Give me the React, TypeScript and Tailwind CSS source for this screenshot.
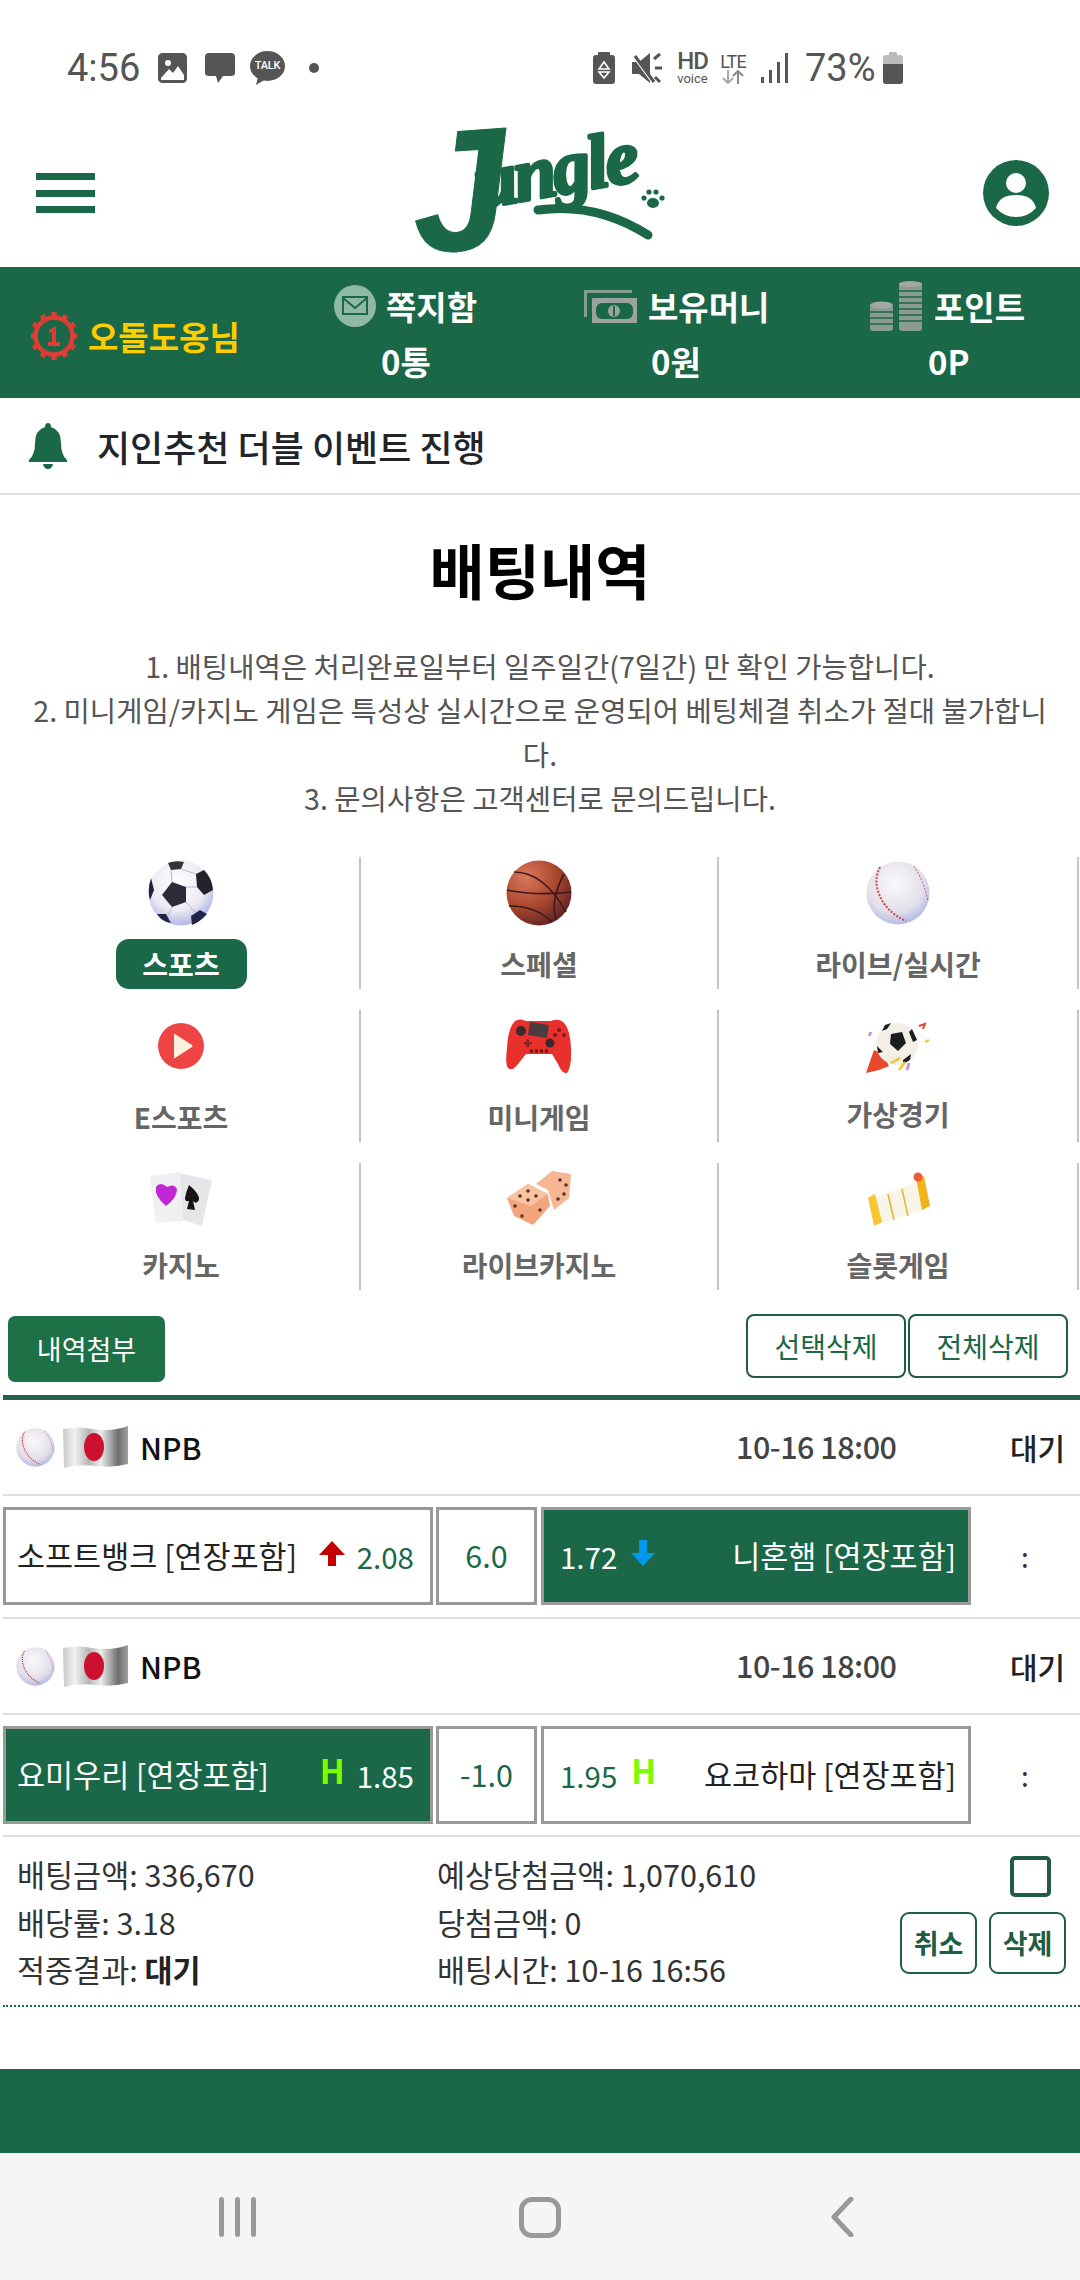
const GREEN = "#1a6847";

// ---- small drawings -------------------------------------------------------

function SoccerBall({ size = 66 }: { size?: number }) {
  return (
    <svg width={size} height={size} viewBox="0 0 66 66">
      <defs>
        <radialGradient id="sb" cx="45%" cy="35%" r="70%">
          <stop offset="0%" stopColor="#ffffff" />
          <stop offset="60%" stopColor="#ecebf4" />
          <stop offset="100%" stopColor="#a2aae0" />
        </radialGradient>
      </defs>
      <circle cx="33" cy="33" r="32.5" fill="url(#sb)" />
      <path d="M24 22 L38 27 L38 42 L24 47 L14 35 Z" fill="#2c2c36" />
      <path d="M20 3 Q27 0 36 2 L33 9 L23 10 Z" fill="#33333d" />
      <path d="M48 14 L56 10 Q64 18 65 30 L56 35 L49 27 Z" fill="#23232d" />
      <path d="M3 18 L6 30 L2 40 Q-1 30 3 18 Z" fill="#20203a" />
      <path d="M43 56 L52 50 L59 54 Q52 62 44 65 Z" fill="#20264a" />
      <path d="M9 54 L18 54 L23 63 Q14 62 9 54 Z" fill="#20264a" />
      <path d="M23 10 L24 22 M38 27 L49 27 M38 42 L47 52 M24 47 L20 55 M33 9 L48 14" stroke="#b8b8c8" strokeWidth="1" fill="none" />
    </svg>
  );
}

function Basketball() {
  return (
    <svg width="66" height="66" viewBox="0 0 66 66">
      <defs>
        <radialGradient id="bb" cx="30%" cy="25%" r="85%">
          <stop offset="0%" stopColor="#d9785a" />
          <stop offset="55%" stopColor="#a9482f" />
          <stop offset="100%" stopColor="#5b1f22" />
        </radialGradient>
      </defs>
      <circle cx="33" cy="33" r="32.5" fill="url(#bb)" />
      <g stroke="#3a1a1c" strokeWidth="1.6" fill="none">
        <path d="M1 30 Q30 36 65 32" />
        <path d="M8 12 Q38 12 60 52" />
        <path d="M3 46 Q30 46 46 62" />
        <path d="M58 14 Q44 40 50 60" />
      </g>
    </svg>
  );
}

function Baseball({ size = 64 }: { size?: number }) {
  return (
    <svg width={size} height={size} viewBox="0 0 64 64">
      <defs>
        <radialGradient id={`bs${size}`} cx="45%" cy="35%" r="70%">
          <stop offset="0%" stopColor="#fbf9fb" />
          <stop offset="65%" stopColor="#e4dfe9" />
          <stop offset="100%" stopColor="#a8b3e2" />
        </radialGradient>
      </defs>
      <circle cx="32" cy="32" r="31.5" fill={`url(#bs${size})`} />
      <path d="M14 6 Q8 18 12 30 Q18 50 40 60" stroke="#c94a4a" strokeWidth="2" strokeDasharray="2 1.5" fill="none" />
      <path d="M48 5 Q58 20 62 40" stroke="#b45a7a" strokeWidth="1" strokeDasharray="2 1.5" fill="none" />
    </svg>
  );
}

function PlayIcon() {
  return (
    <svg width="46" height="46" viewBox="0 0 46 46">
      <circle cx="23" cy="23" r="23" fill="#ee4444" />
      <path d="M16 12 Q15 11 17 11 L34 22 Q35 23 34 24 L17 35 Q15 36 16 34 Z" fill="#fdf0dc" />
    </svg>
  );
}

function Gamepad() {
  return (
    <svg width="66" height="56" viewBox="0 0 66 56">
      <path d="M9 3 Q14 0 20 3 L45 3 Q52 0 57 4 Q64 10 65 30 Q66 48 61 55 Q56 56 52 46 L46 36 L20 36 L12 46 Q6 54 2 50 Q-1 46 1 30 Q2 10 9 3 Z" fill="#e8302c" />
      <path d="M24 4 L43 7 L41 20 L22 17 Z" fill="#4a3c40" />
      <circle cx="15" cy="13" r="5" fill="#3b2a2a" />
      <circle cx="44" cy="25" r="4.5" fill="#3b2a2a" />
      <path d="M18 24 h2.5 v-2.5 h2.5 v2.5 h2.5 v2.5 h-2.5 v2.5 h-2.5 v-2.5 h-2.5 Z" fill="#8c1f1f" />
      <circle cx="53" cy="12" r="2" fill="#7d1a1a" />
      <circle cx="58" cy="17" r="2" fill="#7d1a1a" />
      <circle cx="49" cy="17" r="2" fill="#7d1a1a" />
      <path d="M24 33 h18" stroke="#6e1616" strokeWidth="3" strokeDasharray="3 2" />
    </svg>
  );
}

function RocketBall() {
  return (
    <svg width="66" height="56" viewBox="0 0 66 56">
      <path d="M1 53 L9 30 L18 34 L24 46 L14 50 Z" fill="#e8482c" />
      <circle cx="32" cy="24" r="21" fill="#f3eee6" />
      <path d="M26 14 L37 12 L41 23 L33 31 L25 24 Z" fill="#1d1d1f" />
      <path d="M20 5 L26 3 L22 9 L17 11 Z M47 9 L52 20 L48 22 L44 12 Z M12 26 L18 32 L13 33 Z M38 40 L46 34 L45 40 L38 44 Z" fill="#1d1d1f" />
      <path d="M26 43 L35 38 M34 50 L40 42" stroke="#f4c430" strokeWidth="2.5" />
      <path d="M42 50 L44 43" stroke="#c084e8" strokeWidth="2.5" />
      <path d="M54 6 L60 4 L58 9" stroke="#e8482c" strokeWidth="2" fill="none" />
      <path d="M4 16 L6 12" stroke="#c084e8" strokeWidth="2.5" />
      <path d="M60 22 L64 20" stroke="#f4c430" strokeWidth="2.5" />
    </svg>
  );
}

function Cards() {
  return (
    <svg width="66" height="54" viewBox="0 0 66 54">
      <path d="M30 1 L64 8 L54 54 L29 46 Z" fill="#e6e5e8" />
      <path d="M2 4 L32 0 L35 49 L8 51 Z" fill="#f0eff2" />
      <path d="M18 34 Q6 24 8 15 Q12 9 19 15 Q26 11 29 17 Q29 26 18 34 Z" fill="#c026d3" />
      <path d="M41 13 Q52 22 51 28 Q48 33 45 29 L47 38 L39 37 L41 29 Q37 30 37 26 Q38 20 41 13 Z" fill="#151515" />
    </svg>
  );
}

function Dice() {
  return (
    <svg width="66" height="56" viewBox="0 0 66 56">
      <path d="M30 14 L46 1 L65 4 L63 28 L48 40 L42 20 Z" fill="#f7b693" />
      <path d="M1 28 L22 14 L42 24 L44 36 L27 55 L8 46 Z" fill="#f4a47c" />
      <path d="M1 28 L22 14 L42 24 L25 36 Z" fill="#f8c3a1" />
      <g fill="#5a3324">
        <circle cx="14" cy="26" r="1.8" /><circle cx="22" cy="21" r="1.8" /><circle cx="30" cy="26" r="1.8" />
        <circle cx="22" cy="30" r="1.8" /><circle cx="9" cy="36" r="1.8" /><circle cx="16" cy="46" r="1.8" />
        <circle cx="34" cy="40" r="1.8" /><circle cx="54" cy="10" r="1.8" /><circle cx="60" cy="15" r="1.8" />
        <circle cx="58" cy="24" r="1.8" /><circle cx="52" cy="29" r="1.8" />
      </g>
    </svg>
  );
}

function Slot() {
  return (
    <svg width="64" height="56" viewBox="0 0 64 56">
      <path d="M8 26 L52 10 L58 38 L12 52 Z" fill="#f8f4e6" />
      <path d="M2 26 L9 22 L16 50 L8 54 Z" fill="#f6c530" />
      <path d="M50 6 L58 4 L64 34 L56 38 Z" fill="#f0b31c" />
      <path d="M22 22 L28 48 M36 17 L42 44" stroke="#e3b93a" strokeWidth="1.6" />
      <circle cx="52" cy="5" r="4.5" fill="#ee5a3a" />
    </svg>
  );
}

function JapanFlag({ id }: { id: string }) {
  return (
    <svg width="68" height="42" viewBox="0 0 68 42">
      <defs>
        <linearGradient id={id} x1="0" x2="1" y1="0" y2="0">
          <stop offset="0%" stopColor="#c8c8c8" />
          <stop offset="18%" stopColor="#f2f2f2" />
          <stop offset="40%" stopColor="#b5b5b5" />
          <stop offset="58%" stopColor="#eeeeee" />
          <stop offset="85%" stopColor="#6e6e6e" />
          <stop offset="100%" stopColor="#a0a0a0" />
        </linearGradient>
      </defs>
      <path d="M1 3 Q18 0 30 3 Q50 6 66 0 L66 38 Q50 42 34 40 Q18 38 2 42 Z" fill={`url(#${id})`} />
      <ellipse cx="32" cy="21" rx="10" ry="14" fill="#cc1030" />
    </svg>
  );
}

// the script wordmark stays real text, only the swoosh and the paw are drawn
function Logo() {
  return (
    <svg width="254" height="128" viewBox="0 0 254 128" className="block overflow-visible">
      <g fill={GREEN} stroke={GREEN} strokeLinejoin="round">
        <text x="-4" y="122" fontSize="172" strokeWidth="1" transform="rotate(-4 40 70)" style={{ fontFamily: "'Liberation Sans', sans-serif", fontStyle: "italic", fontWeight: 700 }}>J</text>
        <text x="62" y="74" fontSize="76" strokeWidth="3.5" letterSpacing="-3" transform="rotate(-10 100 70)" style={{ fontFamily: "'Liberation Serif', serif", fontStyle: "italic", fontWeight: 700 }}>ungle</text>
      </g>
      <path d="M122 82 Q180 74 232 107" stroke={GREEN} strokeWidth="9" strokeLinecap="round" fill="none" />
      <g fill={GREEN}>
        <ellipse cx="237" cy="75" rx="6" ry="5" />
        <circle cx="228" cy="70" r="2.6" /><circle cx="233" cy="64" r="2.6" />
        <circle cx="240" cy="64" r="2.6" /><circle cx="246" cy="70" r="2.6" />
      </g>
    </svg>
  );
}

// ---- status bar bits ------------------------------------------------------

function StatusBar() {
  return (
    <div className="flex h-[110px] items-center pt-[26px] text-[#555] [font-family:Roboto,sans-serif]">
      <span className="ml-[67px] w-[91px] text-[38px] leading-none">4:56</span>
      <svg width="29" height="30" viewBox="0 0 29 30" className="block">
        <rect x="1.5" y="1.5" width="26" height="27" rx="3" fill="none" stroke="#555" strokeWidth="3" />
        <rect x="3" y="3" width="23" height="24" fill="#555" />
        <circle cx="10" cy="10" r="3" fill="#fff" />
        <path d="M3 25 L11 16 L15 20 L20 13 L26 22 L26 27 L3 27 Z" fill="#fff" />
      </svg>
      <svg width="32" height="32" viewBox="0 0 32 32" className="ml-[17px] block">
        <path d="M5 1 H27 Q31 1 31 5 V21 Q31 24 27 24 H19 L14 31 L12 24 H5 Q1 24 1 21 V5 Q1 1 5 1 Z" fill="#555" />
      </svg>
      <div className="relative ml-[14px] h-[34px] w-[35px]">
        <svg width="35" height="34" viewBox="0 0 35 34" className="block">
          <ellipse cx="17.5" cy="15" rx="17.5" ry="15" fill="#555" />
          <path d="M8 26 L6 34 L16 28 Z" fill="#555" />
        </svg>
        <span className="absolute left-0 top-[8px] w-full text-center text-[11px] font-medium leading-[14px] tracking-tight text-white">TALK</span>
      </div>
      <span className="ml-[24px] size-[10px] rounded-full bg-[#555]" />

      <svg width="22" height="32" viewBox="0 0 22 32" className="ml-[274px] block">
        <rect x="5" y="0" width="12" height="4" rx="1" fill="#555" />
        <rect x="0" y="3" width="22" height="29" rx="3" fill="#555" />
        <path d="M11 10 L16 17 H6 Z M6 20 H16 L11 26 Z" fill="none" stroke="#fff" strokeWidth="1.6" />
      </svg>
      <svg width="30" height="32" viewBox="0 0 30 32" className="ml-[17px] block">
        <path d="M0 10 H7 L18 1 V31 L7 22 H0 Z" fill="#555" />
        <path d="M1 3 L20 29" stroke="#fff" strokeWidth="3" />
        <path d="M3 4 L22 30" stroke="#555" strokeWidth="3" />
        <path d="M22 7 L28 2 M23 16 H30 M23 25 L28 30" stroke="#555" strokeWidth="3" />
      </svg>
      <div className="ml-[14px] flex w-[33px] flex-col items-center">
        <span className="text-[24px] font-medium leading-[21px] tracking-tighter">HD</span>
        <span className="text-[13px] leading-[13px]">voice</span>
      </div>
      <div className="ml-[9px] flex w-[30px] flex-col items-center">
        <span className="text-[18px] leading-[17px] tracking-tighter">LTE</span>
        <svg width="26" height="14" viewBox="0 0 26 14" className="block">
          <path d="M8 0 V13 M3 8 L8 13 L13 8" stroke="#aaa" strokeWidth="2" fill="none" />
          <path d="M18 14 V1 M13 6 L18 1 L23 6" stroke="#888" strokeWidth="2" fill="none" />
        </svg>
      </div>
      <svg width="28" height="30" viewBox="0 0 28 30" className="ml-[13px] block">
        <rect x="0" y="24" width="3" height="6" fill="#555" />
        <rect x="8" y="17" width="3" height="13" fill="#555" />
        <rect x="16" y="9" width="3" height="21" fill="#555" />
        <rect x="24" y="0" width="3" height="30" fill="#555" />
      </svg>
      <span className="ml-[16px] w-[78px] text-[38px] leading-none">73%</span>
      <svg width="20" height="32" viewBox="0 0 20 32" className="block">
        <rect x="6" y="0" width="8" height="4" rx="1" fill="#bbb" />
        <rect x="0" y="3" width="20" height="29" rx="3" fill="#bbb" />
        <path d="M0 12 H20 V29 Q20 32 17 32 H3 Q0 32 0 29 Z" fill="#555" />
      </svg>
    </div>
  );
}

// ---- green member strip ---------------------------------------------------

function Medal() {
  const teeth = Array.from({ length: 12 }, (_, i) => i * 30);
  return (
    <svg width="46" height="48" viewBox="0 0 46 48">
      <g fill="#e03c36">
        {teeth.map((a) => (
          <rect key={a} x="20.5" y="0" width="5" height="6" transform={`rotate(${a} 23 24)`} />
        ))}
      </g>
      <circle cx="23" cy="24" r="18.5" fill="none" stroke="#e03c36" strokeWidth="4.5" />
      <path d="M18 18 L25 14 V30 H29 V34 H17 V30 H21 V20 L18 21 Z" fill="#e03c36" />
    </svg>
  );
}

function Envelope() {
  return (
    <svg width="42" height="42" viewBox="0 0 42 42">
      <circle cx="21" cy="21" r="21" fill="#8fb8a6" />
      <rect x="9" y="12" width="24" height="17" fill="none" stroke={GREEN} strokeWidth="2" />
      <path d="M9 13 L21 23 L33 13" fill="none" stroke={GREEN} strokeWidth="2" />
    </svg>
  );
}

function Cash() {
  return (
    <svg width="53" height="34" viewBox="0 0 53 34">
      <path d="M0 1 H48 V4 H3 V28 H0 Z" fill="#849e92" />
      <rect x="8" y="9" width="45" height="25" fill="#9aa39e" />
      <rect x="12" y="14" width="37" height="16" rx="6" fill={GREEN} />
      <circle cx="30" cy="22" r="6" fill="#9aa39e" />
      <rect x="29" y="17" width="2" height="10" fill={GREEN} />
    </svg>
  );
}

function Coins() {
  return (
    <svg width="52" height="50" viewBox="0 0 52 50">
      <rect x="0" y="23" width="23" height="27" rx="3" fill="#8a9b92" />
      <rect x="29" y="1" width="23" height="49" rx="3" fill="#8a9b92" />
      <ellipse cx="11.5" cy="24" rx="11.5" ry="3.5" fill="#a3a8a4" />
      <ellipse cx="40.5" cy="3" rx="11.5" ry="3" fill="#a3a8a4" />
      <path d="M0 31 H23 M0 37 H23 M0 43 H23 M29 10 H52 M29 16 H52 M29 22 H52 M29 28 H52 M29 34 H52 M29 40 H52" stroke={GREEN} strokeWidth="1.4" />
    </svg>
  );
}

function StatItem({ icon, label, value, width, labelGap, valueOffset }: {
  icon: React.ReactNode; label: string; value: string; width: string; labelGap: string; valueOffset: string;
}) {
  return (
    <div className={`flex ${width} flex-col`}>
      <div className={`flex h-[58px] items-center ${labelGap}`}>
        {icon}
        <span className="text-[33px] font-bold leading-none text-white">{label}</span>
      </div>
      <span className={`${valueOffset} -mt-[3px] text-[33px] font-bold leading-[58px] text-white`}>{value}</span>
    </div>
  );
}

function MemberStrip() {
  return (
    <div className="flex h-[131px] items-start bg-[#1a6847] pt-[10px]">
      <div className="ml-[31px] mt-[35px] flex w-[303px] items-center gap-[11px]">
        <Medal />
        <span className="text-[33px] font-bold leading-none text-[#ffcc00]">오돌도옹님</span>
      </div>
      <StatItem icon={<Envelope />} label="쪽지함" value="0통" width="w-[250px]" labelGap="gap-[10px]" valueOffset="ml-[47px]" />
      <StatItem icon={<Cash />} label="보유머니" value="0원" width="w-[286px]" labelGap="gap-[11px]" valueOffset="ml-[67px]" />
      <StatItem icon={<Coins />} label="포인트" value="0P" width="w-[200px]" labelGap="gap-[12px]" valueOffset="ml-[58px]" />
    </div>
  );
}

// ---- category grid --------------------------------------------------------

const CATEGORIES: { label: string; icon: React.ReactNode; iconPad: string; labelPad?: string; rowH?: string; active?: boolean }[] = [
  { label: "스포츠", icon: <SoccerBall />, iconPad: "pt-[3px]", active: true },
  { label: "스페셜", icon: <Basketball />, iconPad: "pt-[3px]" },
  { label: "라이브/실시간", icon: <Baseball />, iconPad: "pt-[4px]" },
  { label: "E스포츠", icon: <PlayIcon />, iconPad: "pt-[13px]" },
  { label: "미니게임", icon: <Gamepad />, iconPad: "pt-[8px]" },
  { label: "가상경기", icon: <RocketBall />, iconPad: "pt-[10px]", labelPad: "-mt-[3px]" },
  { label: "카지노", icon: <Cards />, iconPad: "pt-[9px]", labelPad: "-mt-[5px]", rowH: "h-[127px]" },
  { label: "라이브카지노", icon: <Dice />, iconPad: "pt-[7px]", labelPad: "-mt-[5px]", rowH: "h-[127px]" },
  { label: "슬롯게임", icon: <Slot />, iconPad: "pt-[9px]", labelPad: "-mt-[5px]", rowH: "h-[127px]" },
];

function CategoryGrid() {
  return (
    <div className="mt-[37px] grid grid-cols-[358px_358px_360px] gap-y-[21px] pl-[3px]">
      {CATEGORIES.map((c) => (
        <div key={c.label} className={`flex ${c.rowH ?? "h-[132px]"} flex-col items-center border-r-2 border-[#c4c4c4]`}>
          <div className={`flex h-[82px] items-start ${c.iconPad}`}>{c.icon}</div>
          {c.active ? (
            <span className="flex h-[50px] w-[131px] items-center justify-center rounded-[13px] bg-[#1a6847] text-[28px] font-bold text-white">
              {c.label}
            </span>
          ) : (
            <span className={`flex h-[50px] items-center text-[28px] font-bold text-[#666] ${c.labelPad ?? ""}`}>{c.label}</span>
          )}
        </div>
      ))}
    </div>
  );
}

// ---- bet history ----------------------------------------------------------

function MatchHead({ id }: { id: string }) {
  return (
    <div className="ml-[3px] flex h-[96px] items-center border-b-2 border-[#dedede] pl-[13px]">
      <Baseball size={39} />
      <div className="ml-[7px]"><JapanFlag id={id} /></div>
      <span className="ml-[10px] w-[596px] text-[30px] font-medium text-[#111]">NPB</span>
      <span className="w-[274px] text-[30.5px] font-medium tracking-[-0.5px] text-[#444]">10-16 18:00</span>
      <span className="text-[30px] font-medium text-[#222]">대기</span>
    </div>
  );
}

function Cell({ on, className, children }: { on?: boolean; className: string; children: React.ReactNode }) {
  return (
    <div className={`flex h-[98px] items-center border-[3px] border-[#999] text-[30.5px] ${on ? "bg-[#1a6847] text-white" : "bg-white text-[#1a6847]"} ${className}`}>
      {children}
    </div>
  );
}

function UpArrow() {
  return (
    <svg width="26" height="25" viewBox="0 0 26 25"><path d="M13 0 L26 14 H17 V25 H9 V14 H0 Z" fill="#c40000" /></svg>
  );
}

function DownArrow() {
  return (
    <svg width="24" height="26" viewBox="0 0 24 26"><path d="M8 0 H16 V13 H24 L12 26 L0 13 H8 Z" fill="#0099ee" /></svg>
  );
}

function BetRow({ home, homeOn, homeMark, homeOdd, line, away, awayOn, awayMark, awayOdd }: {
  home: string; homeOn?: boolean; homeMark: React.ReactNode; homeOdd: string; line: string;
  away: string; awayOn?: boolean; awayMark: React.ReactNode; awayOdd: string;
}) {
  return (
    <div className="ml-[3px] mt-[11px] flex gap-[3px]">
      <Cell on={homeOn} className="w-[430px] pl-[11px] pr-[16px]">
        <span className={`mr-auto ${homeOn ? "text-white" : "text-[#222]"}`}>{home}</span>
        <span className="-mt-[6px] mr-[12px]">{homeMark}</span>
        <span className="text-[29.5px]">{homeOdd}</span>
      </Cell>
      <Cell className="w-[101px] justify-center">{line}</Cell>
      <Cell on={awayOn} className="ml-[1px] w-[430px] pl-[16px] pr-[12px]">
        <span className="text-[29.5px]">{awayOdd}</span>
        <span className="-mt-[6px] ml-[14px]">{awayMark}</span>
        <span className={`ml-auto ${awayOn ? "text-white" : "text-[#222]"}`}>{away}</span>
      </Cell>
      <span className="ml-[47px] self-center text-[28px] leading-none text-[#333]">:</span>
    </div>
  );
}

const HandicapMark = () => <span className="text-[33px] font-bold leading-none text-[#7cfc00]">H</span>;

function InfoLine({ label, value, strong }: { label: string; value: string; strong?: boolean }) {
  return (
    <div className="h-[47.5px] text-[30.5px] leading-[47px] text-[#333]">
      {label}: <span className={strong ? "font-bold text-[#222]" : ""}>{value}</span>
    </div>
  );
}

export default function App() {
  return (
    <div className="flex h-[2280px] w-[1080px] flex-col overflow-hidden bg-white [font-family:'Noto_Sans_CJK_KR','Noto_Sans',sans-serif]">
      <StatusBar />

      <header className="relative flex h-[157px] items-center justify-between pl-[36px] pr-[31px] pt-[9px]">
        <div className="flex h-[40px] w-[59px] flex-col justify-between">
          <span className="h-[7px] bg-[#1a6847]" />
          <span className="h-[7px] bg-[#1a6847]" />
          <span className="h-[7px] bg-[#1a6847]" />
        </div>
        <div className="absolute left-[416px] top-[18px]"><Logo /></div>
        <svg width="66" height="66" viewBox="0 0 66 66" className="block">
          <circle cx="33" cy="33" r="33" fill="#1a6847" />
          <circle cx="33" cy="23" r="10" fill="#fff" />
          <path d="M13 48 Q16 35 33 35 Q50 35 53 48 Q45 57 33 57 Q21 57 13 48 Z" fill="#fff" />
        </svg>
      </header>

      <MemberStrip />

      <div className="flex h-[97px] items-center gap-[30px] border-b-2 border-[#dddddd] pl-[29px]">
        <svg width="38" height="46" viewBox="0 0 38 46">
          <path d="M19 0 Q22 0 22 4 Q32 7 32 20 Q32 32 38 37 V39 H0 V37 Q6 32 6 20 Q6 7 16 4 Q16 0 19 0 Z M14 41 H24 Q23 46 19 46 Q15 46 14 41 Z" fill="#1a6847" />
        </svg>
        <span className="text-[36px] font-medium leading-none text-[#212529]">지인추천 더블 이벤트 진행</span>
      </div>

      <h1 className="mt-[38px] text-center text-[60px] font-bold leading-[72px] text-black">배팅내역</h1>
      <p className="mt-[39px] px-[30px] text-center text-[28.6px] leading-[44px] text-[#555]">
        1. 배팅내역은 처리완료일부터 일주일간(7일간) 만 확인 가능합니다.
        <br />
        2. 미니게임/카지노 게임은 특성상 실시간으로 운영되어 베팅체결 취소가 절대 불가합니다.
        <br />
        3. 문의사항은 고객센터로 문의드립니다.
      </p>

      <CategoryGrid />

      <div className="mt-[12px] flex items-start pl-[8px] pr-[12px]">
        <button className="mt-[14px] h-[66px] w-[157px] rounded-[7px] bg-[#1e7047] text-[27px] text-white">내역첨부</button>
        <button className="ml-auto mt-[12px] h-[64px] w-[160px] rounded-[8px] border-2 border-[#1f5c43] text-[28px] text-[#1a6847]">선택삭제</button>
        <button className="ml-[2px] mt-[12px] h-[64px] w-[160px] rounded-[8px] border-2 border-[#1f5c43] text-[28px] text-[#1a6847]">전체삭제</button>
      </div>

      <div className="ml-[3px] mt-[13px] h-[5px] bg-[#26614a]" />

      <MatchHead id="jp1" />
      <BetRow
        home="소프트뱅크 [연장포함]"
        homeMark={<UpArrow />}
        homeOdd="2.08"
        line="6.0"
        away="니혼햄 [연장포함]"
        awayOn
        awayMark={<DownArrow />}
        awayOdd="1.72"
      />
      <div className="ml-[3px] mt-[12px] border-b-2 border-[#dedede]" />

      <MatchHead id="jp2" />
      <BetRow
        home="요미우리 [연장포함]"
        homeOn
        homeMark={<HandicapMark />}
        homeOdd="1.85"
        line="-1.0"
        away="요코하마 [연장포함]"
        awayMark={<HandicapMark />}
        awayOdd="1.95"
      />
      <div className="ml-[3px] mt-[11px] border-b-2 border-[#dedede]" />

      <div className="ml-[3px] flex h-[170px] border-b-2 border-dotted border-[#1a6847] pl-[14px] pt-[14px]">
        <div className="w-[420px]">
          <InfoLine label="배팅금액" value="336,670" />
          <InfoLine label="배당률" value="3.18" />
          <InfoLine label="적중결과" value="대기" strong />
        </div>
        <div>
          <InfoLine label="예상당첨금액" value="1,070,610" />
          <InfoLine label="당첨금액" value="0" />
          <InfoLine label="배팅시간" value="10-16 16:56" />
        </div>
        <div className="ml-auto mr-[14px] flex w-[165px] flex-col items-end">
          <span className="mr-[15px] mt-[5px] size-[41px] rounded-[5px] border-4 border-[#1f5c43]" />
          <div className="mt-[15px] flex gap-[12px]">
            <button className="h-[62px] w-[77px] rounded-[9px] border-2 border-[#1f5c43] text-[27px] font-bold text-[#1f5c43]">취소</button>
            <button className="h-[62px] w-[77px] rounded-[9px] border-2 border-[#1f5c43] text-[27px] font-bold text-[#1f5c43]">삭제</button>
          </div>
        </div>
      </div>

      <div className="mt-[62px] h-[84px] bg-[#1a6847]" />

      <nav className="flex flex-1 items-start bg-[#f5f5f5] pt-[44px]">
        <div className="ml-[219px] flex h-[40px] w-[37px] justify-between">
          <span className="w-[5px] rounded-full bg-[#999]" />
          <span className="w-[5px] rounded-full bg-[#999]" />
          <span className="w-[5px] rounded-full bg-[#999]" />
        </div>
        <span className="ml-[263px] h-[41px] w-[42px] rounded-[13px] border-[5px] border-[#999]" />
        <svg width="24" height="40" viewBox="0 0 24 40" className="ml-[269px] block">
          <path d="M21 2 L4 20 L21 38" fill="none" stroke="#999" strokeWidth="5" strokeLinecap="round" strokeLinejoin="round" />
        </svg>
      </nav>
    </div>
  );
}
